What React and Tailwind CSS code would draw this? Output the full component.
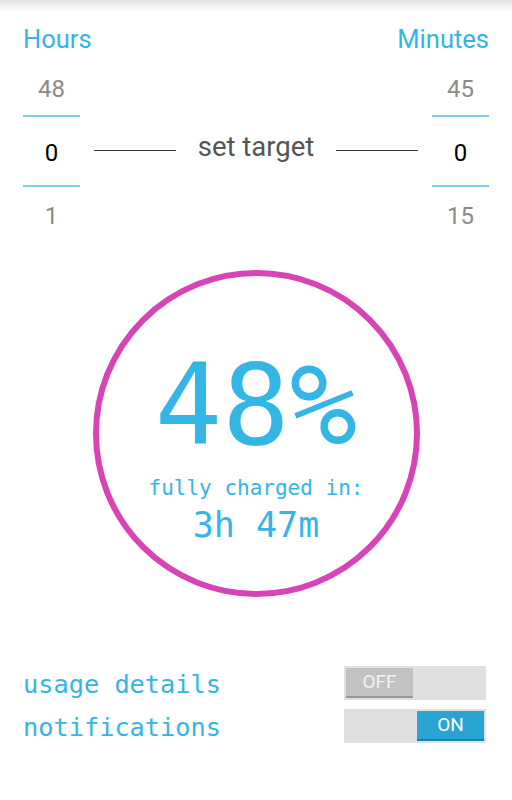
export default function App() {
  const blue = "text-[#33b5e5]";
  return (
    <div className="w-[512px] h-[800px] bg-white relative overflow-hidden" style={{ fontFamily: "Roboto, sans-serif" }}>
      <div className="h-3 bg-gradient-to-b from-[#e4e4e4] to-white" />
      <div className="px-[23px]">
        <div className={`flex justify-between text-[25.5px] leading-[28px] mt-[13px] ${blue}`}>
          <span>Hours</span>
          <span>Minutes</span>
        </div>

        <div className="flex items-start mt-[20px]">
          <Picker top="48" mid="0" bottom="1" />
          <div className="flex-1 flex items-center mt-[64px] px-[14px]">
            <div className="flex-1 h-px bg-[#333]" />
            <span className="px-[22px] text-[27.5px] leading-[32px] text-[#555] -mt-[6px]">set target</span>
            <div className="flex-1 h-px bg-[#333]" />
          </div>
          <Picker top="45" mid="0" bottom="15" />
        </div>

        <div className="flex justify-center mt-[38px]">
          <div className="w-[327px] h-[327px] rounded-full border-[6px] border-[#d843b5] flex flex-col items-center" style={{ fontFamily: '"DejaVu Sans Mono", monospace' }}>
            <div className={`text-[112px] leading-[110px] mt-[74px] ${blue}`}>48%</div>
            <div className={`text-[21px] leading-[26px] mt-[15px] ${blue}`}>fully charged in:</div>
            <div className={`text-[35px] leading-[40px] mt-[4px] ${blue}`}>3h 47m</div>
          </div>
        </div>

        <div className="mt-[67px] flex flex-col gap-[5px]">
          <Row label="usage details" on={false} />
          <Row label="notifications" on={true} />
        </div>
      </div>
    </div>
  );
}

function Picker({ top, mid, bottom }) {
  return (
    <div className="w-[57px] flex flex-col items-center text-[24px] leading-[32px]">
      <div className="text-[#8a8a8a]">{top}</div>
      <div className="w-full h-[2px] bg-[#7ccbea] mt-[10px]" />
      <div className="text-black mt-[20px]">{mid}</div>
      <div className="w-full h-[2px] bg-[#7ccbea] mt-[16px]" />
      <div className="text-[#8a8a8a] mt-[13px]">{bottom}</div>
    </div>
  );
}

function Row({ label, on }) {
  return (
    <div className="flex items-start justify-between">
      <span className="text-[25.3px] leading-[34px] pt-[4px] text-[#33b5e5]" style={{ fontFamily: '"DejaVu Sans Mono", monospace' }}>
        {label}
      </span>
      <div className={`w-[142px] h-[34px] mt-[2px] bg-[#e0e0e0] flex items-center px-[2px] mr-[3px] ${on ? "justify-end" : "justify-start"}`}>
        {on ? (
          <div className="w-[67px] h-[30px] bg-[#2aa5d3] border-b-2 border-[#1f82a8] flex items-center justify-center text-white text-[19px]">ON</div>
        ) : (
          <div className="w-[67px] h-[30px] bg-[#c2c2c2] border-b-2 border-[#989898] flex items-center justify-center text-[#f2f2f2] text-[19px]">OFF</div>
        )}
      </div>
    </div>
  );
}
